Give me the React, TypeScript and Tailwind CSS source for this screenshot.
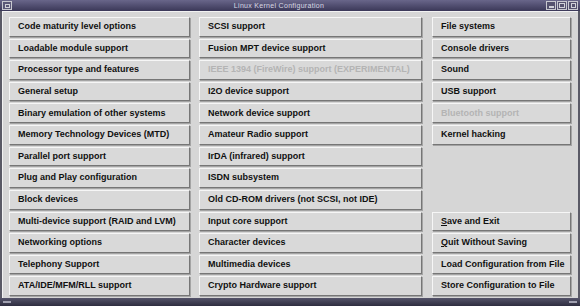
import React from "react";

type Item = { label: string; disabled?: boolean; u?: boolean };

const col1: Item[] = [
  { label: "Code maturity level options" },
  { label: "Loadable module support" },
  { label: "Processor type and features" },
  { label: "General setup" },
  { label: "Binary emulation of other systems" },
  { label: "Memory Technology Devices (MTD)" },
  { label: "Parallel port support" },
  { label: "Plug and Play configuration" },
  { label: "Block devices" },
  { label: "Multi-device support (RAID and LVM)" },
  { label: "Networking options" },
  { label: "Telephony Support" },
  { label: "ATA/IDE/MFM/RLL support" },
];
const col2: Item[] = [
  { label: "SCSI support" },
  { label: "Fusion MPT device support" },
  { label: "IEEE 1394 (FireWire) support (EXPERIMENTAL)", disabled: true },
  { label: "I2O device support" },
  { label: "Network device support" },
  { label: "Amateur Radio support" },
  { label: "IrDA (infrared) support" },
  { label: "ISDN subsystem" },
  { label: "Old CD-ROM drivers (not SCSI, not IDE)" },
  { label: "Input core support" },
  { label: "Character devices" },
  { label: "Multimedia devices" },
  { label: "Crypto Hardware support" },
];
const col3: (Item | null)[] = [
  { label: "File systems" },
  { label: "Console drivers" },
  { label: "Sound" },
  { label: "USB support" },
  { label: "Bluetooth support", disabled: true },
  { label: "Kernel hacking" },
  null,
  null,
  null,
  { label: "Save and Exit", u: true },
  { label: "Quit Without Saving", u: true },
  { label: "Load Configuration from File" },
  { label: "Store Configuration to File" },
];

function Btn({ item }: { item: Item | null }) {
  if (!item) return <div />;
  const first = item.label[0];
  const rest = item.label.slice(1);
  return (
    <div
      className={`flex items-center pl-[8px] bg-[#d9d9d9] border border-t-[#f6f6f6] border-l-[#f6f6f6] border-b-[#767676] border-r-[#767676] shadow-[1px_1px_0_#a4a4a4] text-[9px] font-bold whitespace-nowrap overflow-hidden ${
        item.disabled ? "text-[#b4b4b4]" : "text-[#101010]"
      }`}
    >
      {item.u ? (
        <span>
          <span className="underline">{first}</span>
          {rest}
        </span>
      ) : (
        <span>{item.label}</span>
      )}
    </div>
  );
}

function Col({ items, w }: { items: (Item | null)[]; w: string }) {
  return (
    <div className={`grid grid-rows-[repeat(13,1fr)] gap-[2px] ${w}`}>
      {items.map((it, i) => (
        <Btn key={i} item={it} />
      ))}
    </div>
  );
}

export default function App() {
  return (
    <div
      className="w-[580px] h-[306px] flex flex-col bg-[#d6d6d6] overflow-hidden"
      style={{ fontFamily: '"Liberation Sans", Arial, sans-serif' }}
    >
      <div className="h-[11px] flex items-center bg-gradient-to-b from-[#69668a] to-[#3b3858]">
        <div className="ml-[2px] w-[10px] h-[9px] border border-[#c8c8d0] bg-[#5b5878] flex items-center justify-center">
          <div className="w-[5px] h-[4px] border border-[#d0d0d8]" />
        </div>
        <div className="flex-1 text-center text-[7px] leading-none text-[#d8d8e4] tracking-[0.3px]">
          Linux Kernel Configuration
        </div>
        <div className="flex gap-[1px] mr-[2px]">
          <div className="w-[10px] h-[9px] border border-[#c8c8d0] bg-[#55526f] flex items-end justify-center pb-[1px]">
            <div className="w-[5px] h-[2px] bg-[#d0d0d8]" />
          </div>
          <div className="w-[10px] h-[9px] border border-[#c8c8d0] bg-[#55526f] flex items-center justify-center">
            <div className="w-[6px] h-[5px] border border-[#d0d0d8]" />
          </div>
          <div className="w-[10px] h-[9px] border border-[#c8c8d0] bg-[#55526f] flex items-center justify-center">
            <div className="w-[5px] h-[5px] border border-[#d0d0d8]" />
          </div>
        </div>
      </div>
      <div className="flex-1 flex border-l-[2px] border-r-[2px] border-l-[#5a5a66] border-r-[#5a5a66]">
        <div className="flex-1 flex pl-[6px] pt-[5px] pb-[2px] border-l border-t border-[#f2f2f2]">
          <Col items={col1} w="w-[181px]" />
          <div className="w-[9px]" />
          <Col items={col2} w="w-[223px]" />
          <div className="w-[10px]" />
          <Col items={col3} w="w-[139px]" />
        </div>
      </div>
      <div className="h-[8px] bg-gradient-to-b from-[#55546a] to-[#2e2d40] flex items-center justify-between px-[3px]">
        <div className="w-[8px] h-[2px] bg-[#a0a0b0]" />
        <div className="w-[8px] h-[2px] bg-[#a0a0b0]" />
      </div>
    </div>
  );
}
